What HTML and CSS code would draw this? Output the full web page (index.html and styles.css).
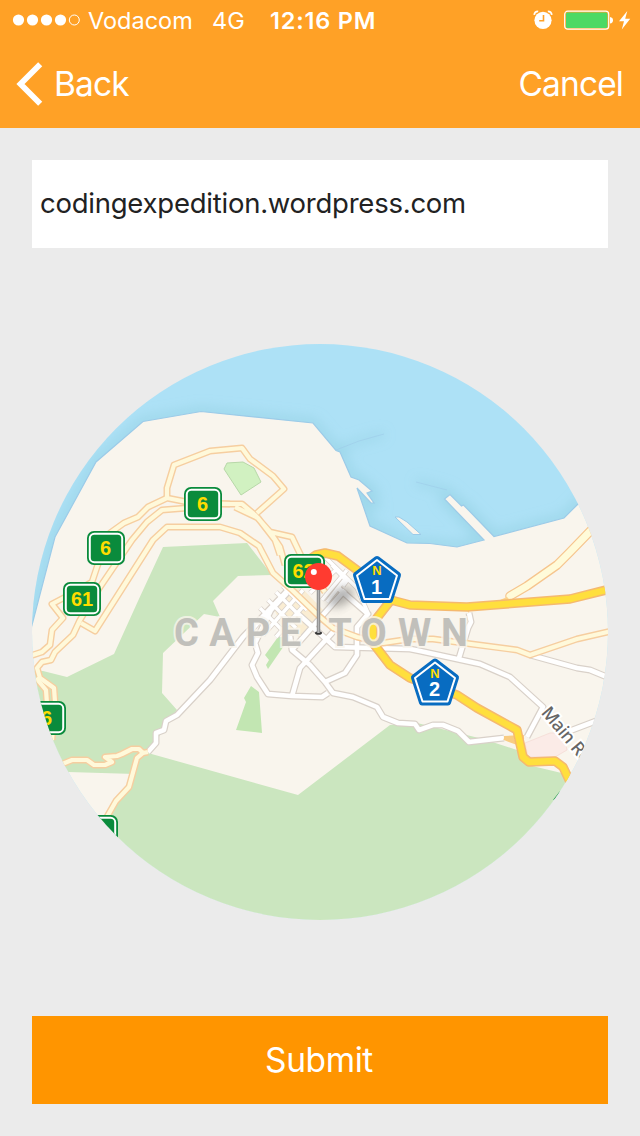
FILE: index.html
```html
<!DOCTYPE html>
<html lang="en">
<head>
<meta charset="utf-8">
<title>Submit location</title>
<link rel="stylesheet" href="styles.css">
</head>
<body>
<div class="screen">
  <header class="header">
    <div class="status">
      <svg class="signal" width="70" height="14" viewBox="0 0 70 14"><g fill="#fff"><circle cx="6.5" cy="7" r="5.6"/><circle cx="20.5" cy="7" r="5.6"/><circle cx="34.5" cy="7" r="5.6"/><circle cx="48.5" cy="7" r="5.6"/></g><circle cx="62.3" cy="7" r="5" fill="none" stroke="#fff"/></svg>
      <span class="carrier">Vodacom</span>
      <span class="network">4G</span>
      <span class="time">12:16 PM</span>
      <svg class="alarm" width="20" height="20" viewBox="0 0 20 20"><circle cx="10" cy="10.3" r="8.6" fill="#fff"/><path d="M1.2 4.8A4 4 0 0 1 5.2 1.3M14.8 1.3A4 4 0 0 1 18.8 4.8" fill="none" stroke="#fff" stroke-width="1.8"/><path d="M10.5 5v5.8H6.2" fill="none" stroke="#ffa126" stroke-width="1.6"/></svg>
      <svg class="battery" width="68" height="22" viewBox="0 0 68 22"><rect x=".7" y="2.2" width="44" height="18" rx="3" fill="none" stroke="#fff" stroke-width="1.2"/><rect x="2" y="3.5" width="41.4" height="15.4" rx="1.5" fill="#4cd964"/><path d="M46 8q3 .5 3 3.3t-3 3.3z" fill="#fff"/><path d="M63.3 2L55 12.3h5L57.8 20.5 66.2 9.7h-5z" fill="#fff"/></svg>
    </div>
    <nav class="nav">
      <a class="back"><svg width="28" height="44" viewBox="0 0 28 44"><path d="M24.2 2.3L4.5 22 24.2 41.7" fill="none" stroke="#fff" stroke-width="5.8"/></svg><span>Back</span></a>
      <a class="cancel">Cancel</a>
    </nav>
  </header>
  <main class="content">
    <div class="field">codingexpedition.wordpress.com</div>
    <div class="map">
      <svg width="576" height="576" viewBox="32 344 576 576">
        <defs>
          <filter id="soft" x="-20%" y="-20%" width="140%" height="140%"><feGaussianBlur stdDeviation="6"/></filter>
          <filter id="shade" x="-50%" y="-50%" width="200%" height="200%"><feGaussianBlur stdDeviation="5"/></filter>
          <linearGradient id="stem"><stop offset="0" stop-color="#777"/><stop offset=".45" stop-color="#bbb"/><stop offset="1" stop-color="#777"/></linearGradient>
          <path id="land" d="M20 665L32 625 55 537 96 462 143 421.500 201 411.500 313 423 336 450.500 340 452 351 477 359 480 372 491 367 493 374 503 371 503 357 488 370 526 407 543 430 543.500 457 547 484 540 444.500 499 450 494.500 461.500 506 463.500 505 494 536.500 564 518 578 504 630 460V930H20Z"/>
          <path id="breakwaters" d="M336 450L359 441 384 434M416 482L447 490"/>
          <g id="cream">
            <path d="M167 498L167 488 174 465 210 451 242 448 250 459 273 476 284 489 257 513"/>
            <path d="M30 656L42 652 50 645 52 630 63 618 52 604 73 593 92 582 97 567 110 533 124 523 138 517 148 507 167 498 187 502 230 504"/>
            <path d="M187 508L162 510 147 522 132 540 100 587 80 620 73 635 55 652 51 660 42 662 37 668 40 678 54 688 55 702 52 740"/>
            <path d="M36 678L46 690 47 704M81 623L95 631 153 540 167 527 220 527 240 533 259 546 273 573 292 590 320 617 333 628 357 637 383 643 410 639 433 639 517 650 530 655 577 639 612 631"/>
            <path d="M280 555L275 540 258 518 235 507M285 565L280 547 270 532 255 515 242 504 205 504M270 532L292 537 303 560 325 592"/>
            <path d="M60 765L72 760 87 760 94 765 105 765 112 762 105 757 117 756 122 754 132 749 139 749 143 753 148 752M143 753L137 758 129 787 116 801 104 822"/>
          </g>
          <g id="white">
            <path d="M148 752L156 743 156 733 164 730 166 721 177 715 210 680 243 637 290 588"/>
            <path d="M287 593L271 610 255 643 258 653 252 665 257 677 268 694 292 696 322 697 328 693M325 682L345 673 357 655 357 627 368 614 337 587"/>
            <path d="M290 636L292 650 310 665 325 682 333 693 353 697 377 707 383 717 398 723 415 724 419 730 433 725 443 725 458 731 469 742 504 738"/>
            <path d="M292 696L300 668 333 632M292 650L345 590M297 613L335 647 410 649 420 651 480 664 510 677 543 707 527 737M469 613L471 622 468 628 459 658M530 655L577 668 590 670 607 677M567 732L596 721"/>
          </g>
          <g id="streets">
            <path d="M260 608L288 636M268 600L296 628M276 592L302 618M283 586L307 610M252 630L293 584M263 635L303 590M276 637L307 602M310 593L338 568M322 600L347 570M332 565L345 579 327 602M326 558L357 588 368 613M343 586L349 578"/>
          </g>
          <path id="gold" d="M306 562L316 555 325 553 338 556 357 570 391 600 410 605 467 607 570 599 614 588M391 600L373 623 373 643 390 665 410 678 457 695 477 708 517 730 523 757 529 762 555 761 563 767 572 786"/>
          <g id="shield">
            <rect width="38" height="34" rx="7" fill="#0a8b3c"/><rect x="2.800" y="2.800" width="32.400" height="28.400" rx="4.500" fill="none" stroke="#fff" stroke-width="2"/>
          </g>
          <g id="pentagon" stroke-linejoin="round">
            <path d="M0-21L21-5 13 20H-13L-21-5Z" fill="#086cc1" stroke="#086cc1" stroke-width="6"/><path d="M0-20L20-4.500 12.500 19H-12.500L-20-4.500Z" fill="none" stroke="#fff" stroke-width="2"/>
          </g>
          <clipPath id="water"><path clip-rule="evenodd" d="M20 330H630V930H20ZM20 665L32 625 55 537 96 462 143 421.500 201 411.500 313 423 336 450.500 340 452 351 477 370 526 407 543 457 547 484 540 444.500 499 450 494.500 494 536.500 564 518 578 504 630 460V930H20Z"/></clipPath>
        </defs>
        <rect x="32" y="344" width="576" height="576" fill="#ade1f6"/>
        <g clip-path="url(#water)"><g fill="none" stroke="#8ccbdc" stroke-opacity=".45" stroke-width="10" filter="url(#soft)"><use href="#land"/><use href="#breakwaters" stroke-width="6"/></g></g>
        <use href="#land" fill="#f9f5ed" stroke="#9ccbe8" stroke-width="1.200"/>
        <use href="#breakwaters" fill="none" stroke="#9cc9e8" stroke-width=".7" stroke-opacity=".8"/>
        <path d="M395 517L399 517 407 522 421 534.500H413Z" fill="#f9f5ed" stroke="#9ccbe8"/>
        <path fill="#cbe6bf" d="M163 547L247 543 272 575 238 576 213 601 220 617 204 614 163 653 162 693 177 710 148 753 298 795 390 725 417 723 483 739 517 750 528 765 570 775 620 800V930H90L104 817 129 787 135 774 68 772H20V671H43L67 677 114 654 138 601Z"/>
        <path fill="#d1f1c1" stroke="#b7d7a8" d="M227 463L243 462 254 468 261 482 241 495 224 469Z"/>
        <path fill="#c2e6b2" d="M251 686L259 692 262 733 236 730 246 702 244 698ZM278 637H290L268 669 266 665 269 660 265 655Z"/>
        <path fill="#fbebe7" stroke="#f3d9d3" stroke-width=".7" d="M525 743L550 733 563 733 567 750 555 757H528Z"/>
        <path fill="#faedd3" d="M274 609L298 584 324 611 299 637 281 624ZM312 570L322 562 334 576 321 588Z"/>
        <g fill="none" stroke-linejoin="round">
          <g stroke="#d9d1c9"><use href="#white" stroke-width="7"/><use href="#streets" stroke-width="5"/></g>
          <g stroke="#fff"><use href="#white" stroke-width="4.600"/><use href="#streets" stroke-width="3.500"/></g>
          <path d="M504 738L524 737M504 738L520 744" stroke="#f9cc82" stroke-width="4"/>
          <use href="#cream" stroke="#f6cea0" stroke-width="7"/>
          <path d="M510 596L527 586 557 565 570 552 600 521" stroke="#f6c58e" stroke-width="9.500" stroke-linecap="round"/>
          <use href="#cream" stroke="#fff9da" stroke-width="4.200"/>
          <path d="M510 596L527 586 557 565 570 552 600 521" stroke="#fffbd9" stroke-width="7" stroke-linecap="round"/>
          <path d="M461 603H470L469 613ZM500 600L507 597 513 603" fill="#fbd38d"/>
          <use href="#gold" stroke="#f5b96f" stroke-width="9.500"/>
          <use href="#gold" stroke="#ffdf3d" stroke-width="6.500"/>
        </g>
        <ellipse cx="341" cy="597" rx="14" ry="8" fill="#333" opacity=".38" transform="rotate(-32 341 597)" filter="url(#shade)"/>
        <text class="city" y="646" x="186.500 222 258 290.500 310 340 373.500 414.500 454.500">CAPE TOWN</text>
        <text class="street" transform="translate(540.500 713) rotate(50)">Main Rd</text>
        <g class="route">
          <use href="#shield" x="184" y="487"/><text x="202.500" y="511">6</text>
          <use href="#shield" x="87" y="531"/><text x="105.500" y="555">6</text>
          <use href="#shield" x="63" y="582"/><text x="82" y="606">61</text>
          <use href="#shield" x="28" y="701"/><text x="46.500" y="725">6</text>
          <use href="#shield" x="80" y="815"/>
          <rect x="284" y="554" width="41" height="34" rx="7" fill="#0a8b3c"/><rect x="286.800" y="556.800" width="35.400" height="28.400" rx="4.500" fill="none" stroke="#fff" stroke-width="2"/><text x="303.500" y="578">62</text>
        </g>
        <path d="M553 800L560 791 558 798Z" fill="#0a8b3c"/>
        <g class="national">
          <use href="#pentagon" x="377" y="580"/><text class="letter" x="377" y="575">N</text><text class="number" x="376.500" y="593.500">1</text>
          <use href="#pentagon" x="435" y="682.500"/><text class="letter" x="435" y="677.500">N</text><text class="number" x="434.500" y="696">2</text>
        </g>
        <ellipse cx="318.500" cy="633" rx="3.500" ry="1.800" fill="#333"/>
        <rect x="316.800" y="588" width="3.400" height="45" fill="url(#stem)"/>
        <circle cx="318.500" cy="576.500" r="13.500" fill="#ff3b30"/><circle cx="313.800" cy="572" r="3" fill="#fff"/>
      </svg>
    </div>
    <button class="submit">Submit</button>
  </main>
</div>
</body>
</html>
```
FILE: styles.css
```css
* { box-sizing: border-box; }
body { margin: 0; font-family: Inter, "Liberation Sans", sans-serif; }
.screen { width: 640px; height: 1136px; background: #ebebeb; display: flex; flex-direction: column; }
.header { height: 128px; background: #ffa126; color: #fff; }
.status { height: 40px; display: flex; align-items: center; padding: 0 8px 0 12px; font-size: 23.5px; white-space: nowrap; }
.signal { margin-right: 6px; }
.carrier { width: 124px; letter-spacing: 0; }
.network { width: 58px; }
.time { font-weight: 600; letter-spacing: 0.8px; }
.alarm { margin-left: auto; margin-right: 11px; }
.battery { flex: none; }
.nav { height: 88px; display: flex; align-items: center; justify-content: space-between; padding: 0 17px 0 16px; font-size: 33.5px; letter-spacing: -0.9px; }
.back { display: flex; align-items: center; gap: 10px; }
.content { flex: 1; display: flex; flex-direction: column; justify-content: space-between; padding: 32px; }
.field { height: 88px; background: #fff; color: #222; display: flex; align-items: center; padding: 0 0 3px 8px; font-size: 27.5px; letter-spacing: -0.24px; }
.map { width: 576px; height: 576px; border-radius: 50%; overflow: hidden; }
.map svg { display: block; }
.city { font: 700 38px Roboto, sans-serif; fill: #c1c0bb; text-anchor: middle; stroke: #f9f5ed; stroke-opacity: 0.8; stroke-width: 4px; paint-order: stroke; }
.street { font: 500 18px "Noto Sans", sans-serif; letter-spacing: -0.4px; fill: #666; stroke: #fff; stroke-width: 4px; paint-order: stroke; }
.route text { font: 700 20px "Liberation Sans", sans-serif; fill: #ffdc00; text-anchor: middle; }
.national text { font-family: "Liberation Sans", sans-serif; font-weight: 700; text-anchor: middle; }
.national .letter { font-size: 13px; fill: #ffdc00; }
.national .number { font-size: 20px; fill: #fff; }
.submit { height: 88px; border: 0; border-radius: 0; background: #ff9500; color: #fff; font: 400 33.5px Inter, "Liberation Sans", sans-serif; letter-spacing: -0.4px; padding: 0 2px 0 0; }
```
